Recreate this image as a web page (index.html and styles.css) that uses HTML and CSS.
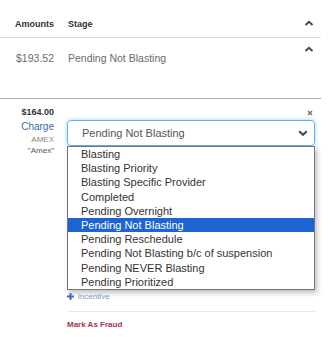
FILE: index.html
```html
<!DOCTYPE html>
<html lang="en">
<head>
    <meta charset="UTF-8">
    <meta name="viewport" content="width=device-width, initial-scale=1.0">
    <title>Charges</title>
    <link rel="stylesheet" href="styles.css">
</head>
<body>
    <div class="charges">
        <div class="row head">
            <div class="amount">Amounts</div>
            <div class="stage">
                <span>Stage</span>
                <svg class="chevron" width="10" height="6" viewBox="0 0 10 6"><polyline points="1.5,5 5,1.8 8.5,5" /></svg>
            </div>
        </div>

        <div class="row charge-row">
            <div class="amount">$193.52</div>
            <div class="stage">
                <span>Pending Not Blasting</span>
                <svg class="chevron" width="10" height="6" viewBox="0 0 10 6"><polyline points="1.5,5 5,1.8 8.5,5" /></svg>
            </div>
        </div>

        <div class="row open-row">
            <div class="details">
                <div class="price">$164.00</div>
                <div class="type">Charge</div>
                <div class="card">AMEX</div>
                <div class="card-name">"Amex"</div>
            </div>
            <div class="editor">
                <div class="close-line">
                    <svg width="6" height="6" viewBox="0 0 6 6"><path d="M1 1 L5 5 M5 1 L1 5" /></svg>
                </div>
                <div class="select">
                    <span>Pending Not Blasting</span>
                    <svg width="10" height="6" viewBox="0 0 10 6"><polyline points="1.2,1.2 5,4.8 8.8,1.2" /></svg>
                </div>
                <ul class="options">
                    <li>Blasting</li>
                    <li>Blasting Priority</li>
                    <li>Blasting Specific Provider</li>
                    <li>Completed</li>
                    <li>Pending Overnight</li>
                    <li class="selected">Pending Not Blasting</li>
                    <li>Pending Reschedule</li>
                    <li>Pending Not Blasting b/c of suspension</li>
                    <li>Pending NEVER Blasting</li>
                    <li>Pending Prioritized</li>
                </ul>
                <div class="incentive">
                    <svg width="7" height="7" viewBox="0 0 7 7"><path d="M3.5 0 V7 M0 3.5 H7" /></svg>
                    <span>incentive</span>
                </div>
                <div class="fraud">Mark As Fraud</div>
            </div>
        </div>
    </div>
</body>
</html>
```

FILE: styles.css
```css
body {
    margin: 0;
    padding: 0;
    background-color: white;
    font-family: "Liberation Sans", Arial, sans-serif;
}

.charges {
    width: 321px;
}

.row {
    display: grid;
    grid-template-columns: 54px 248px;
    column-gap: 13px;
    padding-right: 6px;
    box-sizing: border-box;
}

.amount {
    text-align: right;
}

.stage {
    display: flex;
    justify-content: space-between;
    align-items: flex-start;
    padding-left: 1px;
}

.chevron polyline {
    fill: none;
    stroke: #4a4a4a;
    stroke-width: 2;
}

.head {
    height: 38px;
    padding-top: 18px;
    border-bottom: 1px solid #dddddd;
    font-size: 9px;
    line-height: 12px;
    font-weight: bold;
    color: #333;
}

.head .chevron {
    margin-top: 2px;
    margin-right: 1px;
}

.charge-row {
    height: 61px;
    padding-top: 13px;
    border-bottom: 1px solid #aaaaaa;
    font-size: 10.5px;
    line-height: 14px;
    color: #6b6b6b;
}

.charge-row .chevron {
    margin-top: -5px;
    margin-right: 1px;
}

.open-row {
    padding-top: 7px;
}

.details {
    text-align: right;
}

.price {
    font-size: 9px;
    line-height: 12px;
    font-weight: bold;
    color: #333;
}

.type {
    margin-top: 2px;
    font-size: 10px;
    line-height: 14px;
    color: #3b6cb0;
}

.card {
    font-size: 8px;
    line-height: 11px;
    color: #888;
}

.card-name {
    font-size: 8px;
    line-height: 11px;
    color: #555;
}

.close-line {
    height: 14px;
    display: flex;
    justify-content: flex-end;
    align-items: flex-start;
    padding-top: 4px;
    padding-right: 2px;
    box-sizing: border-box;
}

.close-line path {
    stroke: #777;
    stroke-width: 1.6;
}

.select {
    height: 26px;
    display: flex;
    justify-content: space-between;
    align-items: center;
    padding: 0 6px 0 14px;
    border: 1px solid #66afe9;
    border-radius: 4px;
    box-shadow: 0 0 4px rgba(102, 175, 233, 0.6);
    box-sizing: border-box;
    font-size: 11px;
    color: #555;
}

.select polyline {
    fill: none;
    stroke: #444;
    stroke-width: 2;
}

.options {
    list-style: none;
    margin: 0;
    padding: 0;
    border: 1px solid #767676;
    box-shadow: 2px 3px 5px rgba(0, 0, 0, 0.25);
    background: white;
}

.options li {
    height: 14.2px;
    line-height: 14.2px;
    padding-left: 13px;
    font-size: 11px;
    color: #333;
}

.options li.selected {
    background-color: #1c64d1;
    color: white;
}

.incentive {
    display: flex;
    align-items: center;
    gap: 4px;
    height: 11px;
    margin-top: 1px;
    font-size: 8px;
    color: #7d98c2;
}

.incentive path {
    stroke: #3a72bd;
    stroke-width: 2;
}

.fraud {
    margin-top: 9px;
    padding-top: 7px;
    border-top: 1px solid #e8e8e8;
    font-size: 8px;
    line-height: 11px;
    font-weight: bold;
    color: #a8354a;
}
```
